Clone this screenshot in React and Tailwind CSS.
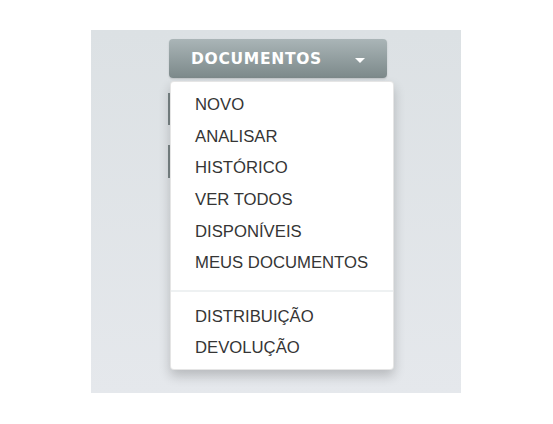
export default function App() {
  const top = ["NOVO", "ANALISAR", "HISTÓRICO", "VER TODOS", "DISPONÍVEIS", "MEUS DOCUMENTOS"];
  const bottom = ["DISTRIBUIÇÃO", "DEVOLUÇÃO"];
  const item = "h-[31.6px] flex items-center pl-[24px] text-[16.7px] text-[#353535]";
  return (
    <div className="w-[553px] h-[424px] bg-white pt-[30px] pl-[91px]" style={{ fontFamily: '"Liberation Sans", Arial, sans-serif' }}>
      <div className="w-[370px] h-[363px] bg-gradient-to-b from-[#dce1e4] to-[#e5e8ec] pl-[78px] pt-[9px]">
        <button className="w-[218px] h-[39px] rounded-[4px] bg-gradient-to-b from-[#aab5b7] to-[#7c898a] flex items-center pl-[22px] pr-[22px] pt-[3px] shadow-[0_1px_2px_rgba(0,0,0,0.15)]">
          <span className="text-[15.5px] font-bold text-white tracking-[0.7px]" style={{ fontFamily: '"DejaVu Sans", sans-serif' }}>DOCUMENTOS</span>
          <span className="ml-auto w-0 h-0 border-l-[5px] border-r-[5px] border-t-[5px] border-l-transparent border-r-transparent border-t-white"></span>
        </button>
        <div className="relative mt-[3px]">
          <div className="absolute left-[-1px] top-[12px] w-[2px] h-[32px] bg-[#7a8587]"></div>
          <div className="absolute left-[-1px] top-[64px] w-[2px] h-[33px] bg-[#7a8587]"></div>
          <div className="relative ml-[1px] w-[224px] bg-white rounded-[4px] border border-black/10 shadow-[0_6px_12px_rgba(0,0,0,0.2)] pt-[7px] pb-[5px]">
            {top.map((t) => (
              <div key={t} className={item}>{t}</div>
            ))}
            <div className="h-[2px] bg-[#eef1f2] mt-[11px] mb-[9px]"></div>
            {bottom.map((t) => (
              <div key={t} className={item}>{t}</div>
            ))}
          </div>
        </div>
      </div>
    </div>
  );
}
